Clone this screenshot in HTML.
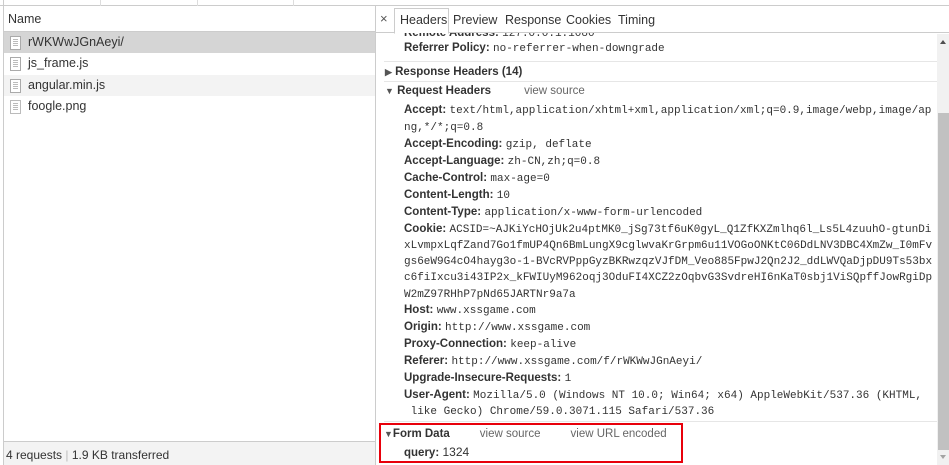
<!DOCTYPE html>
<html><head><meta charset="utf-8"><style>
*{margin:0;padding:0;box-sizing:border-box}
body{width:949px;height:465px;overflow:hidden;background:#fff;font-family:"Liberation Sans",sans-serif;font-size:12px;color:#222;position:relative}
.a{position:absolute;white-space:nowrap}
.l{position:absolute;left:404px;white-space:nowrap;line-height:16px;font-size:12px}
.l b{color:#333;font-weight:bold;font-size:11.5px}
.l span{font-family:"Liberation Mono",monospace;font-size:11px;color:#333}
.sec{position:absolute;left:385px;white-space:nowrap;font-weight:bold;font-size:11.5px;color:#333;line-height:16px}
.vs{font-weight:normal;color:#666;font-size:11.5px}
.hr{position:absolute;left:384px;width:553px;height:1px;background:#e6e6e6}
.row{position:absolute;height:21px}
.ic{position:absolute;width:11px;height:14px;border:1px solid #aaa;background:#fff}
.ic:after{content:"";position:absolute;left:2px;top:2px;width:5px;height:7px;background:repeating-linear-gradient(#bbb 0 1px,transparent 1px 2px)}
.nm{position:absolute;top:3px;font-size:12.5px;color:#333}
</style></head><body>
<div class="a" style="left:0;top:0;width:949px;height:6px;background:#fff;border-bottom:1px solid #ccc"></div>
<div class="a" style="left:100px;top:0;width:1px;height:6px;background:#ddd"></div>
<div class="a" style="left:197px;top:0;width:1px;height:6px;background:#ddd"></div>
<div class="a" style="left:293px;top:0;width:1px;height:6px;background:#ddd"></div>
<div class="a" style="left:3px;top:0;width:1px;height:465px;background:#ccc"></div>
<div class="a" style="left:4px;top:6px;width:371px;height:26px;border-bottom:1px solid #ccc"></div>
<div class="a" style="left:8px;top:12px;font-size:12.5px;color:#333">Name</div>
<div class="row" style="top:32px;left:4px;width:371px;background:#d5d5d5"><div class="ic" style="top:4px;left:6px"></div><div class="nm" style="left:24px">rWKWwJGnAeyi/</div></div>
<div class="row" style="top:53px;left:4px;width:371px"><div class="ic" style="top:4px;left:6px"></div><div class="nm" style="left:24px">js_frame.js</div></div>
<div class="row" style="top:75px;left:4px;width:371px;background:#f3f3f3"><div class="ic" style="top:4px;left:6px"></div><div class="nm" style="left:24px">angular.min.js</div></div>
<div class="row" style="top:96px;left:4px;width:371px"><div class="ic" style="top:4px;left:6px;border-color:#bbb"></div><div class="nm" style="left:24px">foogle.png</div></div>
<div class="a" style="left:4px;top:441px;width:371px;height:24px;border-top:1px solid #ccc;background:#f3f3f3"></div>
<div class="a" style="left:6px;top:448px;font-size:12px;color:#333">4 requests <span style="color:#bbb">|</span> 1.9 KB transferred</div>
<div class="a" style="left:375px;top:6px;width:1px;height:459px;background:#ccc"></div>
<div class="a" style="left:376px;top:6px;width:573px;height:27px;border-bottom:1px solid #ccc"></div>
<div class="a" style="left:380px;top:11px;font-size:13px;color:#555">×</div>
<div class="a" style="left:394px;top:8px;width:55px;height:26px;border:1px solid #ccc;border-bottom:1px solid #fff;background:#fff"></div>
<div class="a" style="left:400px;top:13px;font-size:12.5px;color:#333">Headers</div>
<div class="a" style="left:453px;top:13px;font-size:12.5px;color:#333">Preview</div>
<div class="a" style="left:505px;top:13px;font-size:12.5px;color:#333">Response</div>
<div class="a" style="left:566px;top:13px;font-size:12.5px;color:#333">Cookies</div>
<div class="a" style="left:618px;top:13px;font-size:12.5px;color:#333">Timing</div>
<div class="l" style="top:24px;clip-path:inset(9px 0 0 0)"><b>Remote Address:</b> <span>127.0.0.1:1080</span></div>
<div class="l" style="top:39px"><b>Referrer Policy:</b> <span>no-referrer-when-downgrade</span></div>
<div class="hr" style="top:61px"></div>
<div class="sec" style="top:64px"><span style="font-size:9px;color:#555">▶</span> Response Headers (14)</div>
<div class="hr" style="top:81px"></div>
<div class="sec" style="top:83px"><span style="font-size:9px;color:#555">▼</span> Request Headers<span class="vs" style="margin-left:33px">view source</span></div>
<div class="l" style="top:101px"><b>Accept:</b> <span>text/html,application/xhtml+xml,application/xml;q=0.9,image/webp,image/ap</span></div>
<div class="l" style="top:118px"><span>ng,*/*;q=0.8</span></div>
<div class="l" style="top:135px"><b>Accept-Encoding:</b> <span>gzip, deflate</span></div>
<div class="l" style="top:152px"><b>Accept-Language:</b> <span>zh-CN,zh;q=0.8</span></div>
<div class="l" style="top:169px"><b>Cache-Control:</b> <span>max-age=0</span></div>
<div class="l" style="top:186px"><b>Content-Length:</b> <span>10</span></div>
<div class="l" style="top:203px"><b>Content-Type:</b> <span>application/x-www-form-urlencoded</span></div>
<div class="l" style="top:220px"><b>Cookie:</b> <span>ACSID=~AJKiYcHOjUk2u4ptMK0_jSg73tf6uK0gyL_Q1ZfKXZmlhq6l_Ls5L4zuuhO-gtunDi</span></div>
<div class="l" style="top:236px"><span>xLvmpxLqfZand7Go1fmUP4Qn6BmLungX9cglwvaKrGrpm6u11VOGoONKtC06DdLNV3DBC4XmZw_I0mFv</span></div>
<div class="l" style="top:252px"><span>gs6eW9G4cO4hayg3o-1-BVcRVPppGyzBKRwzqzVJfDM_Veo885FpwJ2Qn2J2_ddLWVQaDjpDU9Ts53bx</span></div>
<div class="l" style="top:268px"><span>c6fiIxcu3i43IP2x_kFWIUyM962oqj3OduFI4XCZ2zOqbvG3SvdreHI6nKaT0sbj1ViSQpffJowRgiDp</span></div>
<div class="l" style="top:285px"><span>W2mZ97RHhP7pNd65JARTNr9a7a</span></div>
<div class="l" style="top:301px"><b>Host:</b> <span>www.xssgame.com</span></div>
<div class="l" style="top:318px"><b>Origin:</b> <span>http://www.xssgame.com</span></div>
<div class="l" style="top:335px"><b>Proxy-Connection:</b> <span>keep-alive</span></div>
<div class="l" style="top:352px"><b>Referer:</b> <span>http://www.xssgame.com/f/rWKWwJGnAeyi/</span></div>
<div class="l" style="top:369px"><b>Upgrade-Insecure-Requests:</b> <span>1</span></div>
<div class="l" style="top:386px"><b>User-Agent:</b> <span>Mozilla/5.0 (Windows NT 10.0; Win64; x64) AppleWebKit/537.36 (KHTML,</span></div>
<div class="l" style="top:402px"><span>&nbsp;like Gecko) Chrome/59.0.3071.115 Safari/537.36</span></div>
<div class="hr" style="top:421px"></div>
<div class="sec" style="top:426px;left:384px"><span style="font-size:9px;color:#555">▼</span>Form Data<span class="vs" style="margin-left:30px">view source</span><span class="vs" style="margin-left:30px">view URL encoded</span></div>
<div class="l" style="top:444px"><b>query:</b> <span style="font-family:'Liberation Sans',sans-serif;font-size:12px">1324</span></div>
<div class="a" style="left:379px;top:423px;width:304px;height:40px;border:2px solid #e8000b"></div>
<div class="a" style="left:937px;top:34px;width:12px;height:431px;background:#f1f1f1"></div>
<div class="a" style="left:940px;top:40px;width:0;height:0;border-left:3px solid transparent;border-right:3px solid transparent;border-bottom:4px solid #505050"></div>
<div class="a" style="left:938px;top:113px;width:11px;height:337px;background:#c1c1c1"></div>
<div class="a" style="left:940px;top:455px;width:0;height:0;border-left:3px solid transparent;border-right:3px solid transparent;border-top:4px solid #a3a3a3"></div>
</body></html>
